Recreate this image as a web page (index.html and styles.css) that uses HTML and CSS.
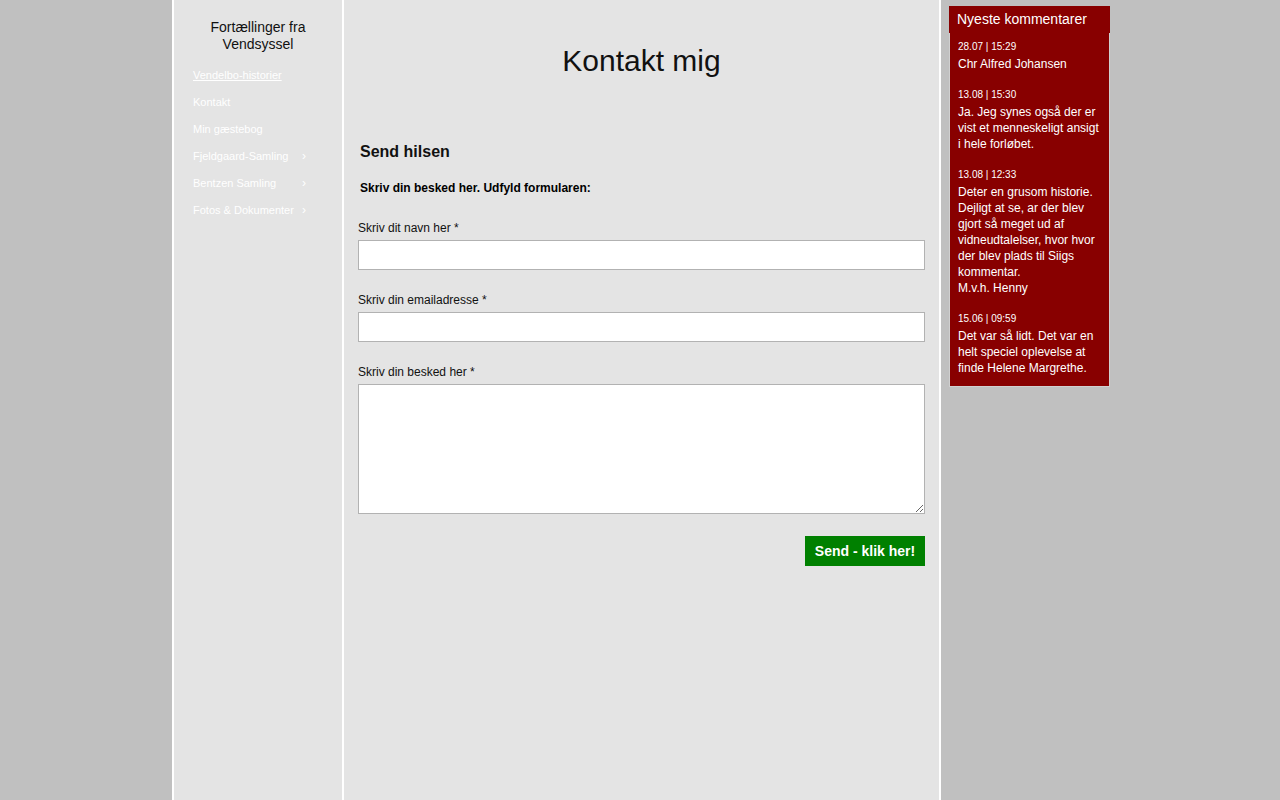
FILE: index.html
```html
<!DOCTYPE html>
<html lang="da">
<head>
<meta charset="utf-8">
<title>Kontakt mig</title>
<link rel="stylesheet" href="styles.css">
</head>
<body>
<div class="page">
  <aside class="sidebar">
    <div class="site-title">Fortællinger fra<br>Vendsyssel</div>
    <ul class="nav">
      <li><a class="active" href="#">Vendelbo-historier</a></li>
      <li><a href="#">Kontakt</a></li>
      <li><a href="#">Min gæstebog</a></li>
      <li><a href="#">Fjeldgaard-Samling</a><span class="chev">›</span></li>
      <li><a href="#">Bentzen Samling</a><span class="chev">›</span></li>
      <li><a href="#">Fotos &amp; Dokumenter</a><span class="chev">›</span></li>
    </ul>
  </aside>
  <main class="main">
    <h1 class="page-title">Kontakt mig</h1>
    <h2 class="form-title">Send hilsen</h2>
    <p class="intro">Skriv din besked her. Udfyld formularen:</p>
    <form class="form">
      <label class="field">
        <span class="label">Skriv dit navn her *</span>
        <input class="input" type="text">
      </label>
      <label class="field">
        <span class="label">Skriv din emailadresse *</span>
        <input class="input" type="text">
      </label>
      <label class="field">
        <span class="label">Skriv din besked her *</span>
        <textarea class="textarea"></textarea>
      </label>
      <div class="actions">
        <button class="submit" type="button">Send - klik her!</button>
      </div>
    </form>
  </main>
  <aside class="right">
    <div class="comments">
      <div class="comments-head">Nyeste kommentarer</div>
      <div class="comments-body">
        <div class="entry">
          <div class="date">28.07 | 15:29</div>
          <div class="text">Chr Alfred Johansen</div>
        </div>
        <div class="entry">
          <div class="date">13.08 | 15:30</div>
          <div class="text">Ja. Jeg synes også der er vist et menneskeligt ansigt i hele forløbet.</div>
        </div>
        <div class="entry">
          <div class="date">13.08 | 12:33</div>
          <div class="text">Deter en grusom historie. Dejligt at se, ar der blev gjort så meget ud af vidneudtalelser, hvor hvor der blev plads til Siigs kommentar.<br>M.v.h. Henny</div>
        </div>
        <div class="entry">
          <div class="date">15.06 | 09:59</div>
          <div class="text">Det var så lidt. Det var en helt speciel oplevelse at finde Helene Margrethe.</div>
        </div>
      </div>
    </div>
  </aside>
</div>
</body>
</html>
```
FILE: styles.css
```css
html, body {
  margin: 0;
  padding: 0;
}
body {
  background: #c0c0c0;
  font-family: "Liberation Sans", Arial, sans-serif;
  color: #000;
}
.page {
  display: flex;
  align-items: stretch;
  margin-left: 172px;
  min-height: 800px;
}
.sidebar {
  width: 168px;
  background: #e4e4e4;
  border-left: 2px solid #fff;
  border-right: 2px solid #fff;
  padding-top: 19px;
  box-sizing: content-box;
}
.site-title {
  text-align: center;
  font-size: 14px;
  line-height: 17px;
  color: #111;
  margin: 0 0 8px 0;
}
.nav {
  list-style: none;
  margin: 0;
  padding: 0 0 0 19px;
}
.nav li {
  display: flex;
  align-items: center;
  height: 27px;
  font-size: 11px;
}
.nav a {
  color: #fff;
  text-decoration: none;
}
.nav a.active {
  text-decoration: underline;
}
.chev {
  color: #fff;
  font-size: 12px;
  margin-left: auto;
  margin-right: 36px;
}
.main {
  width: 567px;
  background: #e4e4e4;
  border-right: 2px solid #fff;
  padding: 0 14px;
}
.page-title {
  font-size: 30px;
  font-weight: normal;
  text-align: center;
  margin: 43px 0 0 0;
  line-height: 36px;
  color: #111;
}
.form-title {
  font-size: 16px;
  font-weight: bold;
  margin: 63px 0 0 2px;
  line-height: 20px;
  color: #111;
}
.intro {
  font-size: 12px;
  font-weight: bold;
  margin: 18px 0 0 2px;
  line-height: 16px;
}
.form {
  margin-top: 24px;
}
.field {
  display: flex;
  flex-direction: column;
  margin-bottom: 22px;
}
.label {
  font-size: 12px;
  line-height: 16px;
  margin-bottom: 4px;
  color: #111;
}
.input {
  box-sizing: border-box;
  width: 567px;
  height: 30px;
  border: 1px solid #b2b2b2;
  background: #fff;
  margin: 0;
  padding: 0 4px;
}
.textarea {
  box-sizing: border-box;
  width: 567px;
  height: 130px;
  border: 1px solid #b2b2b2;
  background: #fff;
  margin: 0;
  padding: 4px;
  font-family: inherit;
}
.actions {
  display: flex;
  justify-content: flex-end;
  margin-top: 3px;
}
.submit {
  background: #008000;
  color: #fff;
  border: none;
  font-family: "Liberation Sans", Arial, sans-serif;
  font-size: 14px;
  font-weight: bold;
  height: 30px;
  width: 120px;
  padding: 0;
  cursor: pointer;
}
.right {
  padding: 6px 8px 0 8px;
}
.comments {
  width: 161px;
  background: #880000;
}
.comments-head {
  color: #fff;
  font-size: 14px;
  line-height: 27px;
  height: 27px;
  padding-left: 8px;
}
.comments-body {
  border: 1px solid #d0d0d0;
  border-top: none;
  background: #880000;
  padding: 7px 7px 10px 8px;
}
.entry + .entry {
  margin-top: 16px;
}
.date {
  color: #fff;
  font-size: 10px;
  line-height: 14px;
  margin-bottom: 2px;
}
.text {
  color: #fff;
  font-size: 12px;
  line-height: 16px;
}
```
